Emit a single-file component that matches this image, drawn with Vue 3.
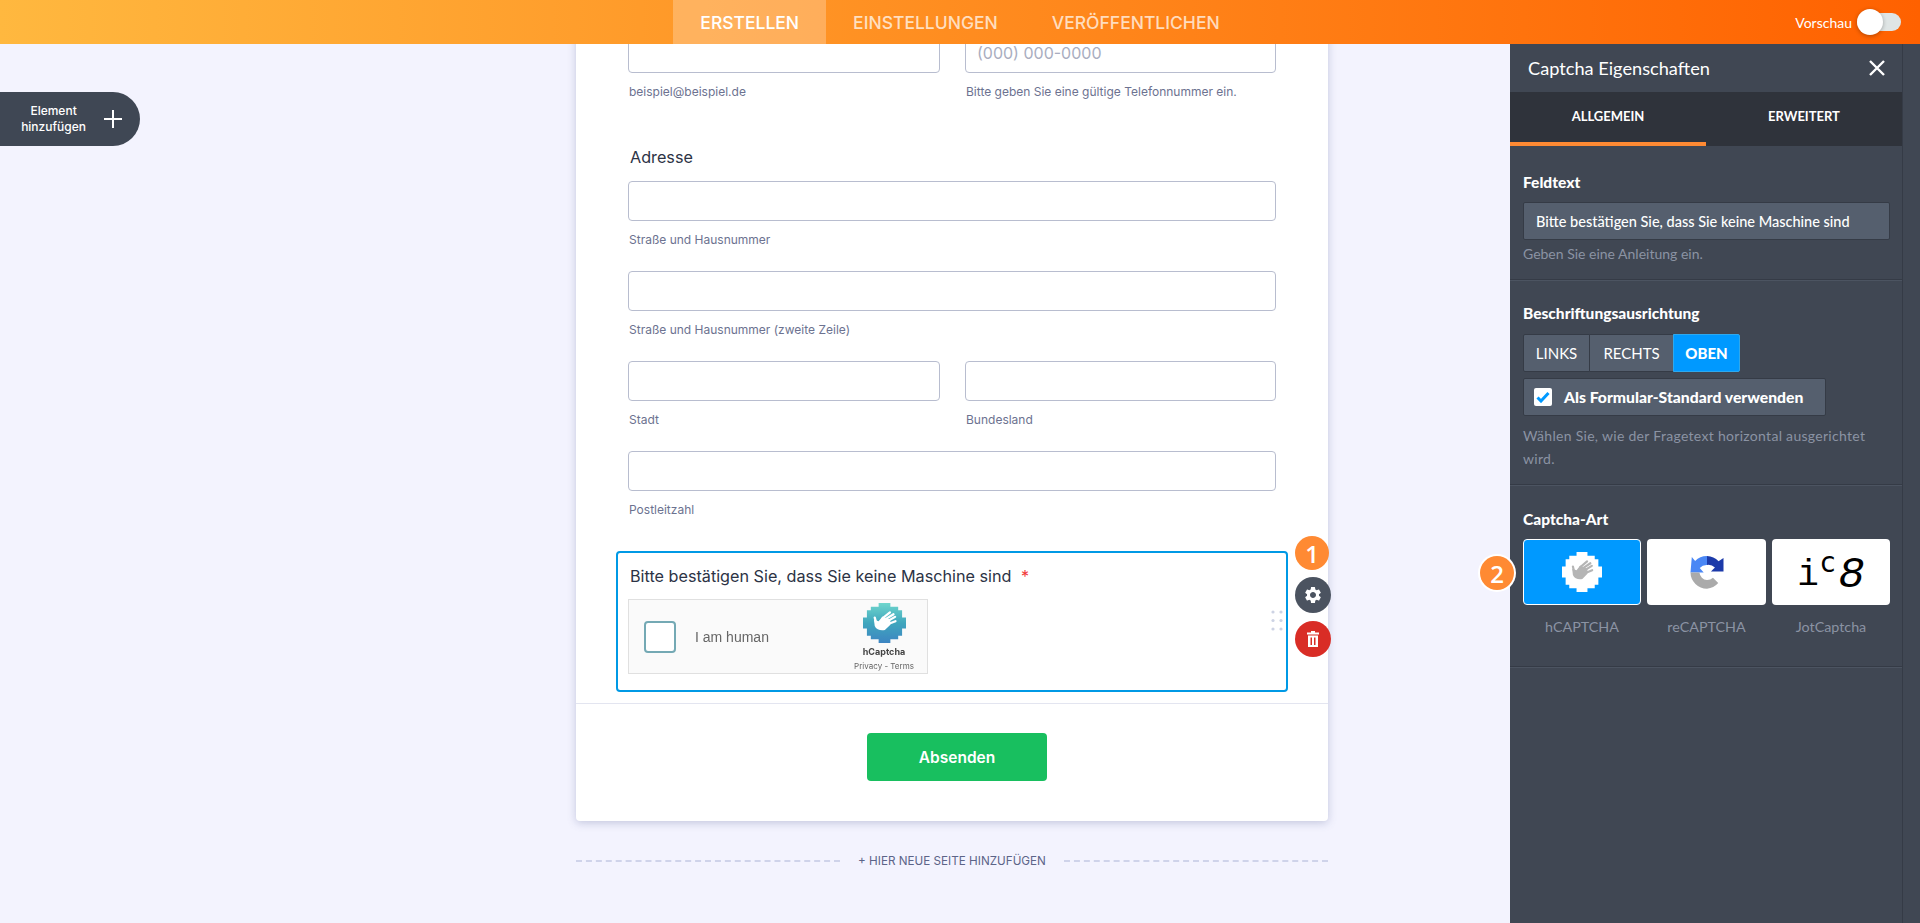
<template>
  <div class="page">
    <header class="topbar">
      <div></div>
      <nav class="nav">
        <a v-for="tab in navTabs" :key="tab" class="nav-tab" :class="{ active: tab === 'ERSTELLEN' }">{{ tab }}</a>
      </nav>
      <div class="preview">
        <span>Vorschau</span>
        <div class="switch"><div class="knob"></div></div>
      </div>
    </header>

    <div class="workspace">
      <main class="canvas">
        <button class="add-element">
          <span>Element<br />hinzufügen</span>
          <svg width="20" height="20" viewBox="0 0 20 20"><path d="M10 1v18M1 10h18" stroke="#fff" stroke-width="2" fill="none" /></svg>
        </button>

        <section class="form-card">
          <div class="fields">
            <div class="row two">
              <div class="field">
                <div class="input"></div>
                <p class="hint">beispiel@beispiel.de</p>
              </div>
              <div class="field">
                <div class="input placeholder">(000) 000-0000</div>
                <p class="hint">Bitte geben Sie eine gültige Telefonnummer ein.</p>
              </div>
            </div>

            <h3 class="label address">Adresse</h3>

            <div class="address-rows">
              <div class="field">
                <div class="input"></div>
                <p class="hint">Straße und Hausnummer</p>
              </div>
              <div class="field">
                <div class="input"></div>
                <p class="hint">Straße und Hausnummer (zweite Zeile)</p>
              </div>
              <div class="row two">
                <div class="field">
                  <div class="input"></div>
                  <p class="hint">Stadt</p>
                </div>
                <div class="field">
                  <div class="input"></div>
                  <p class="hint">Bundesland</p>
                </div>
              </div>
              <div class="field">
                <div class="input"></div>
                <p class="hint">Postleitzahl</p>
              </div>
            </div>

            <div class="captcha-box">
              <h3 class="label">Bitte bestätigen Sie, dass Sie keine Maschine sind <span class="star">*</span></h3>
              <div class="hcaptcha">
                <div class="hc-check"></div>
                <span class="hc-text">I am human</span>
                <div class="hc-brand">
                  <svg width="43" height="40" viewBox="0 0 11 11" preserveAspectRatio="none">
                    <defs>
                      <linearGradient id="hcgrad" x1="0" y1="0" x2="0" y2="1">
                        <stop offset="0" stop-color="#6fd6cd" />
                        <stop offset="0.5" stop-color="#3fa6bd" />
                        <stop offset="1" stop-color="#3d85c2" />
                      </linearGradient>
                    </defs>
                    <path fill="url(#hcgrad)" :d="pixelBlob" />
                    <path :d="handFingers" stroke="#fff" stroke-width="0.6" stroke-linecap="round" fill="none" />
                    <path :d="handPalm" fill="#fff" />
                  </svg>
                  <strong>hCaptcha</strong>
                  <small>Privacy - Terms</small>
                </div>
              </div>
              <svg class="drag" width="12" height="21" viewBox="0 0 12 21">
                <g fill="#cdd3e4">
                  <circle v-for="d in dragDots" :key="d[0] + '-' + d[1]" :cx="d[0]" :cy="d[1]" r="1.6" />
                </g>
              </svg>
              <div class="side-actions">
                <button class="round gear">
                  <svg width="20" height="20" viewBox="0 0 24 24"><path fill="#fff" d="M19.14 12.94c.04-.3.06-.61.06-.94 0-.32-.02-.64-.07-.94l2.03-1.58a.49.49 0 0 0 .12-.61l-1.92-3.32a.488.488 0 0 0-.59-.22l-2.39.96c-.5-.38-1.03-.7-1.62-.94l-.36-2.54a.484.484 0 0 0-.48-.41h-3.84c-.24 0-.43.17-.47.41l-.36 2.54c-.59.24-1.13.57-1.62.94l-2.39-.96c-.22-.08-.47 0-.59.22L2.74 8.87c-.12.21-.08.47.12.61l2.03 1.58c-.05.3-.09.63-.09.94s.02.64.07.94l-2.03 1.58a.49.49 0 0 0-.12.61l1.92 3.32c.12.22.37.29.59.22l2.39-.96c.5.38 1.03.7 1.62.94l.36 2.54c.05.24.24.41.48.41h3.84c.24 0 .44-.17.47-.41l.36-2.54c.59-.24 1.13-.56 1.62-.94l2.39.96c.22.08.47 0 .59-.22l1.92-3.32c.12-.22.07-.47-.12-.61l-2.01-1.58zM12 15.6c-1.98 0-3.6-1.62-3.6-3.6s1.62-3.6 3.6-3.6 3.6 1.62 3.6 3.6-1.62 3.6-3.6 3.6z" /></svg>
                </button>
                <button class="round trash">
                  <svg width="12" height="16" viewBox="0 0 12 16"><path fill="#fff" fill-rule="evenodd" d="M0 1.500h4V0h4v1.500h4v2H0ZM1 4.500h10V16H1ZM3.500 6.500V14h1.500V6.500ZM7 6.500V14h1.500V6.500Z" /></svg>
                </button>
              </div>
              <div class="step-badge one">1</div>
            </div>
          </div>

          <div class="submit-row">
            <button class="submit">Absenden</button>
          </div>
        </section>

        <div class="new-page">
          <span class="dash"></span>
          <span class="new-page-text">+ HIER NEUE SEITE HINZUFÜGEN</span>
          <span class="dash"></span>
        </div>
      </main>

      <aside class="panel">
        <div class="panel-inner">
          <div class="panel-head">
            <h2>Captcha Eigenschaften</h2>
            <svg width="16" height="16" viewBox="0 0 16 16"><path d="M1 1l14 14M15 1L1 15" stroke="#fff" stroke-width="2.4" fill="none" /></svg>
          </div>
          <div class="panel-tabs">
            <div class="panel-tab active">ALLGEMEIN</div>
            <div class="panel-tab">ERWEITERT</div>
          </div>

          <section class="group first">
            <h4>Feldtext</h4>
            <div class="text-input">Bitte bestätigen Sie, dass Sie keine Maschine sind</div>
            <p class="desc">Geben Sie eine Anleitung ein.</p>
          </section>

          <section class="group second">
            <h4>Beschriftungsausrichtung</h4>
            <div class="segments">
              <span class="seg links">LINKS</span>
              <span class="seg rechts">RECHTS</span>
              <span class="seg oben">OBEN</span>
            </div>
            <div class="default-check">
              <span class="checkbox">
                <svg width="14" height="12" viewBox="0 0 14 12"><path d="M1.500 6.500 5 10l7.500-8" stroke="#0099ff" stroke-width="3" fill="none" /></svg>
              </span>
              Als Formular-Standard verwenden
            </div>
            <p class="desc two-lines">Wählen Sie, wie der Fragetext horizontal ausgerichtet wird.</p>
          </section>

          <section class="group third">
            <h4>Captcha-Art</h4>
            <div class="tiles">
              <div class="tile-col">
                <div class="tile selected">
                  <svg width="40" height="40" viewBox="0 0 11 11">
                    <path fill="#fff" :d="pixelBlob" />
                    <path :d="handFingers" stroke="#b5b5b5" stroke-width="0.6" stroke-linecap="round" fill="none" />
                    <path :d="handPalm" fill="#b5b5b5" />
                  </svg>
                </div>
                <span>hCAPTCHA</span>
              </div>
              <div class="tile-col">
                <div class="tile">
                  <svg width="34" height="33" viewBox="0 0 100 100">
                    <path fill="#4a87f5" d="M50 0A50 50 0 0 0 14 15L4 3 0 50H40L28 36A28 28 0 0 1 50 27Z" />
                    <path fill="#1c3aa9" d="M50 0A50 50 0 0 1 85 16L100 6V47H62L74 35A28 28 0 0 0 50 27Z" />
                    <path fill="#aaaaaa" d="M0 50H27A26 26 0 0 0 50 73 26 26 0 0 0 68 66L84 82A50 50 0 0 1 50 99 50 50 0 0 1 0 50Z" />
                  </svg>
                </div>
                <span>reCAPTCHA</span>
              </div>
              <div class="tile-col">
                <div class="tile jot">
                  <span class="jot-i">i</span><span class="jot-c">c</span><span class="jot-8">8</span>
                </div>
                <span>JotCaptcha</span>
              </div>
            </div>
            <div class="step-badge two">2</div>
          </section>
        </div>
      </aside>
    </div>
  </div>
</template>

<script setup>
const navTabs = ['ERSTELLEN', 'EINSTELLUNGEN', 'VERÖFFENTLICHEN']

// same stepped blob and hand for the widget logo and the tile
const pixelBlob = 'M4 0H7V1H9V2H10V4H11V7H10V9H9V10H7V11H4V10H2V9H1V7H0V4H1V2H2V1H4Z'
const handFingers = 'M5 4.2 6.9 2.6M5.700 4.500 7.800 3.100M6.300 5 8.200 3.800M6.600 5.700 8.300 5M3.300 5.200 3 4'
const handPalm = 'M2.800 4.600 4 5 5 3.700 7 4.600 7 6 5.600 7.400C4.600 7.600 3.400 7.400 3 6.300Z'

const dragDots = [
  [2, 2], [10, 2],
  [2, 10.5], [10, 10.5],
  [2, 19], [10, 19]
]
</script>

<style>
html, body {
  margin: 0;
  height: 100%;
  overflow: hidden;
}
</style>

<style scoped>
* {
  box-sizing: border-box;
}

.page {
  height: 923px;
  display: flex;
  flex-direction: column;
  background: #f3f3fe;
  font-family: Inter, "Liberation Sans", sans-serif;
  overflow: hidden;
}

.topbar {
  height: 44px;
  flex: none;
  display: grid;
  grid-template-columns: 1fr auto 1fr;
  background: linear-gradient(90deg, #ffb83f 0%, #ff6100 100%);
  position: relative;
  z-index: 5;
}

.nav {
  display: flex;
}

.nav-tab {
  display: flex;
  align-items: center;
  padding: 0 27px;
  font-size: 17.500px;
  font-weight: 500;
  color: rgba(255, 255, 255, 0.72);
}

.nav-tab.active {
  color: #fff;
  background: rgba(255, 255, 255, 0.25);
}

.preview {
  display: flex;
  align-items: center;
  justify-content: flex-end;
  gap: 5px;
  padding-right: 19px;
  color: #fff;
  font-size: 14px;
  font-family: Lato, sans-serif;
}

.switch {
  width: 44px;
  height: 18px;
  border-radius: 9px;
  background: #dfe5e5;
  position: relative;
}

.knob {
  position: absolute;
  left: 0;
  top: -4px;
  width: 26px;
  height: 26px;
  border-radius: 50%;
  background: #fff;
  box-shadow: 0 1px 4px rgba(0, 0, 0, 0.3);
}

.workspace {
  flex: 1;
  min-height: 0;
  display: flex;
}

.canvas {
  flex: 1;
  min-width: 0;
  position: relative;
  overflow: hidden;
  padding-left: 576px;
}

.add-element {
  position: absolute;
  left: 0;
  top: 48px;
  width: 140px;
  height: 54px;
  border: none;
  border-radius: 0 27px 27px 0;
  background: #3f4754;
  color: #fff;
  display: flex;
  align-items: center;
  justify-content: flex-end;
  gap: 17px;
  padding: 0 17px 0 0;
  font-family: Inter, sans-serif;
  font-size: 12px;
  font-weight: 500;
  line-height: 16px;
  text-align: center;
}

.form-card {
  width: 752px;
  margin-top: -40px;
  background: #fff;
  border-radius: 4px;
  box-shadow: 0 2px 8px rgba(86, 96, 150, 0.3);
}

.fields {
  padding: 29px 52px 11px;
}

.row.two {
  display: grid;
  grid-template-columns: 312px 311px;
  gap: 25px;
}

.input {
  height: 40px;
  border: 1px solid #b8bdcf;
  border-radius: 4px;
  background: #fff;
}

.placeholder {
  display: flex;
  align-items: center;
  padding: 0 11px;
  color: #a9adc0;
  font-size: 16px;
}

.hint {
  margin: 9px 0 1px;
  padding-left: 1px;
  font-size: 12px;
  line-height: 20px;
  color: #6c7290;
}

.label {
  margin: 0;
  padding-left: 2px;
  font-size: 16.200px;
  font-weight: 400;
  line-height: 24px;
  color: #2c3345;
}

.address {
  margin: 42px 0 12px;
}

.address-rows {
  display: flex;
  flex-direction: column;
  gap: 20px;
}

.captcha-box {
  margin: 30px -12px 0;
  padding: 11px 12px 16px 10px;
  height: 141px;
  border: 2px solid #0099e5;
  border-radius: 4px;
  position: relative;
}

.star {
  color: #f23a3c;
  margin-left: 5px;
}

.hcaptcha {
  margin-top: 11px;
  width: 300px;
  height: 75px;
  border: 1px solid #e0e0e0;
  background: #fafafa;
  display: flex;
  align-items: center;
  padding: 0 4px 0 15px;
  filter: blur(0.5px);
}

.hc-check {
  width: 32px;
  height: 32px;
  border: 2px solid #74a9b4;
  border-radius: 4px;
  background: #fff;
}

.hc-text {
  margin-left: 19px;
  font-family: "Liberation Sans", sans-serif;
  font-size: 14px;
  color: #666;
}

.hc-brand {
  margin-left: auto;
  align-self: flex-start;
  padding-top: 3px;
  width: 78px;
  display: flex;
  flex-direction: column;
  align-items: center;
}

.hc-brand strong {
  font-size: 9px;
  line-height: 12px;
  margin-top: 3px;
  color: #444;
}

.hc-brand small {
  font-size: 8px;
  line-height: 12px;
  margin-top: 2px;
  color: #666;
  white-space: nowrap;
}

.drag {
  position: absolute;
  right: 3px;
  top: 57px;
}

.side-actions {
  position: absolute;
  left: calc(100% + 9px);
  top: 24px;
  display: flex;
  flex-direction: column;
  gap: 8px;
}

.round {
  width: 36px;
  height: 36px;
  border: none;
  border-radius: 50%;
  padding: 0;
  display: grid;
  place-items: center;
}

.gear {
  background: #4b5360;
}

.trash {
  background: #d92d26;
}

.step-badge {
  position: absolute;
  width: 34px;
  height: 34px;
  border-radius: 50%;
  background: #ff8a33;
  color: #fff;
  display: grid;
  place-items: center;
  font-family: "Open Sans", sans-serif;
  font-size: 24px;
  font-weight: 600;
}

.step-badge.one {
  left: calc(100% + 9px);
  top: -17px;
}

.step-badge.two {
  left: -30px;
  top: 71px;
  box-shadow: 0 0 0 2px #fff;
}

.submit-row {
  border-top: 1px solid #e3e5f0;
  padding: 29px 0 40px;
  display: flex;
  justify-content: center;
}

.submit {
  width: 180px;
  height: 48px;
  margin-left: 10px;
  border: none;
  border-radius: 4px;
  background: #18bf5f;
  color: #fff;
  font-family: Inter, sans-serif;
  font-size: 15.500px;
  font-weight: 600;
}

.new-page {
  width: 752px;
  margin-top: 33px;
  display: flex;
  align-items: center;
  gap: 18px;
}

.dash {
  flex: 1;
  border-top: 2px dashed #cfd3ea;
}

.new-page-text {
  font-size: 11.700px;
  color: #5c6488;
}

.panel {
  width: 410px;
  flex: none;
  background: #404753;
  color: #fff;
  font-family: Lato, sans-serif;
}

.panel-inner {
  width: 393px;
  height: 100%;
  border-right: 1px solid #353b46;
}

.panel-head {
  height: 48px;
  display: flex;
  align-items: center;
  justify-content: space-between;
  padding: 0 17px 0 18px;
}

.panel-head h2 {
  margin: 0;
  font-size: 18.200px;
  font-weight: 400;
}

.panel-tabs {
  height: 54px;
  display: flex;
  background: #2f333b;
}

.panel-tab {
  flex: 1;
  display: flex;
  align-items: center;
  justify-content: center;
  padding-bottom: 2px;
  font-size: 13px;
  font-weight: 700;
  border-bottom: 4px solid transparent;
}

.panel-tab.active {
  border-bottom-color: #ff8a33;
}

.group {
  padding: 0 12px 0 13px;
  border-bottom: 1px solid #353b46;
  box-shadow: 0 1px 0 #4c5461;
  position: relative;
}

.group.first {
  height: 134px;
  padding-top: 26px;
}

.group.second {
  height: 205px;
  padding-top: 23px;
}

.group.third {
  height: 182px;
  padding-top: 24px;
}

.group h4 {
  margin: 0;
  font-size: 15.500px;
  font-weight: 900;
  line-height: 20px;
}

.text-input {
  margin-top: 10px;
  height: 38px;
  border: 1px solid #353b46;
  border-radius: 2px;
  background: #555f6e;
  display: flex;
  align-items: center;
  padding-left: 12px;
  font-size: 14.500px;
  font-weight: 500;
}

.desc {
  margin: 2px 0 0;
  font-size: 14px;
  line-height: 23px;
  color: #8b93a3;
}

.two-lines {
  margin-top: 8px;
  letter-spacing: 0.3px;
  max-width: 345px;
}

.segments {
  margin-top: 11px;
  display: flex;
  height: 38px;
}

.seg {
  display: flex;
  align-items: center;
  justify-content: center;
  background: #555f6e;
  border: 1px solid #353b46;
  font-size: 15px;
}

.links {
  width: 67px;
  border-radius: 2px 0 0 2px;
}

.rechts {
  width: 83px;
  border-left: none;
  border-right: none;
}

.oben {
  width: 67px;
  background: #0099ff;
  border-color: #2fa8ec;
  border-radius: 0 2px 2px 0;
  font-weight: 900;
}

.default-check {
  margin-top: 6px;
  width: 303px;
  height: 38px;
  border: 1px solid #353b46;
  border-radius: 2px;
  background: #555f6e;
  display: flex;
  align-items: center;
  gap: 12px;
  padding-left: 10px;
  font-size: 15.700px;
  font-weight: 900;
}

.checkbox {
  width: 18px;
  height: 18px;
  border-radius: 2px;
  background: #fff;
  display: grid;
  place-items: center;
}

.tiles {
  margin-top: 10px;
  display: grid;
  grid-template-columns: 118px 119px 118px;
  gap: 6px;
}

.tile-col {
  display: flex;
  flex-direction: column;
  align-items: center;
  gap: 13px;
  font-size: 14.300px;
  color: #8b93a3;
}

.tile {
  width: 100%;
  height: 66px;
  border-radius: 4px;
  background: #fff;
  display: flex;
  align-items: center;
  justify-content: center;
}

.tile.selected {
  background: #0099ff;
  border: 1px solid #fff;
}

.jot {
  color: #000;
  align-items: flex-end;
  padding-bottom: 14px;
}

.jot-i {
  font-family: "Liberation Mono", monospace;
  font-size: 36px;
  line-height: 30px;
  width: 22px;
}

.jot-c {
  font-family: "DejaVu Sans Mono", monospace;
  font-size: 28px;
  line-height: 56px;
  width: 19px;
}

.jot-8 {
  font-family: "Liberation Mono", monospace;
  font-style: italic;
  font-size: 44px;
  line-height: 32px;
}
</style>
